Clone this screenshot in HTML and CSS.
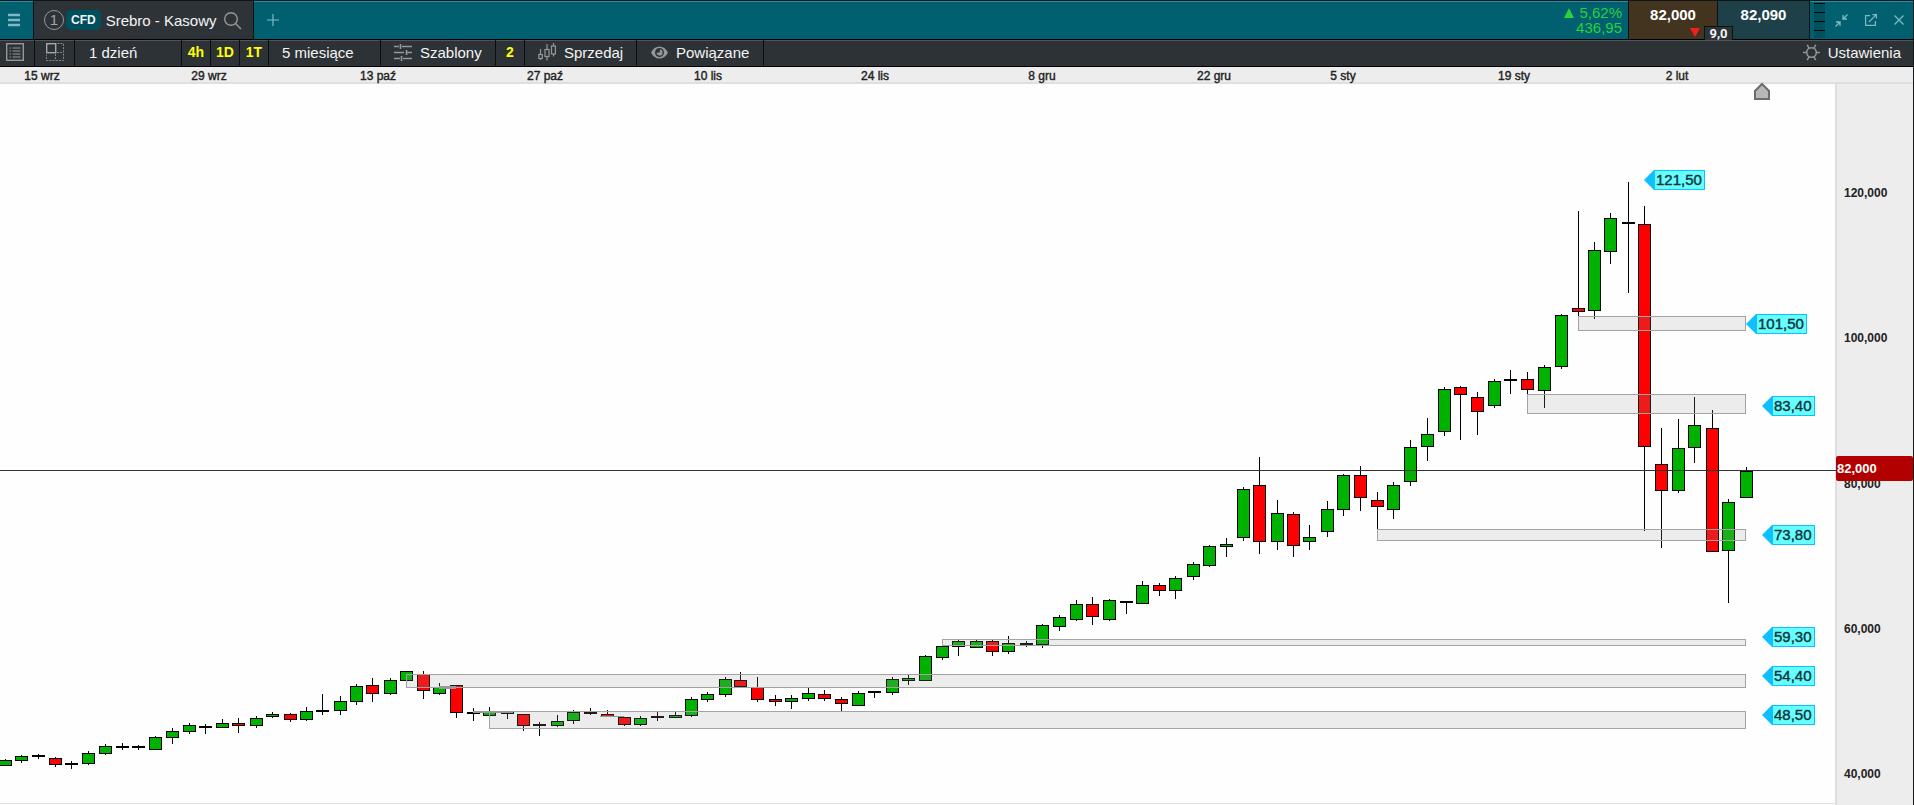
FILE: index.html
```html
<!DOCTYPE html>
<html lang="pl">
<head>
<meta charset="utf-8">
<title>Srebro - Kasowy</title>
<link rel="stylesheet" href="styles.css">
</head>
<body>
<header class="topbar">
  <button class="menu-btn" aria-label="Menu">
    <svg width="12" height="14" viewBox="0 0 12 14"><path d="M0 2H12M0 7H12M0 12H12" stroke="#7fb9c4" stroke-width="2.4"/></svg>
  </button>
  <div class="tab">
    <span class="tab-num">1</span>
    <span class="cfd">CFD</span>
    <h1 class="tab-title">Srebro - Kasowy</h1>
    <button class="icon-btn" aria-label="Szukaj">
      <svg width="19" height="19" viewBox="0 0 19 19" fill="none" stroke="#94989a" stroke-width="1.4"><circle cx="8" cy="8" r="6.3"/><path d="M12.5 12.5L18 18"/></svg>
    </button>
  </div>
  <button class="add-btn" aria-label="Dodaj kartę">
    <svg width="12" height="12" viewBox="0 0 12 12"><path d="M6 0V12M0 6H12" stroke="#7fb9c4" stroke-width="1.2"/></svg>
  </button>
  <div class="change">
    <div class="change-row"><svg width="10" height="10" viewBox="0 0 10 10"><path d="M5 0L10 10H0Z" fill="#27d23a"/></svg>5,62%</div>
    <div class="change-row">436,95</div>
  </div>
  <div class="quotes">
    <button class="quote sell">82,000</button>
    <button class="quote buy">82,090</button>
    <svg class="down" width="10" height="9" viewBox="0 0 10 9"><path d="M0 0H10L5 9Z" fill="#f51d1d"/></svg>
    <span class="spread">9,0</span>
  </div>
  <div class="window-tools">
    <span class="grip"></span>
    <button class="icon-btn" aria-label="Zmniejsz">
      <svg width="13" height="13" viewBox="0 0 13 13" fill="none" stroke="#7fb9c4" stroke-width="1.3"><path d="M12.5 .5L8.5 4.5M8 1V5H12M.5 12.5L4.500 8.500M1 8H5V12"/></svg>
    </button>
    <button class="icon-btn" aria-label="Otwórz w nowym oknie">
      <svg width="12" height="12" viewBox="0 0 12 12" fill="none" stroke="#7fb9c4" stroke-width="1.2"><path d="M5 1.600H.6V11.400H10.400V7M4 8L10.800 1.200M7.500 .6H11.400V4.500"/></svg>
    </button>
    <button class="icon-btn" aria-label="Zamknij">
      <svg width="10" height="10" viewBox="0 0 10 10" stroke="#7fb9c4" stroke-width="1.3"><path d="M.5 .5L9.500 9.500M9.500 .5L.5 9.500"/></svg>
    </button>
  </div>
</header>

<nav class="toolbar">
  <button class="tool tool-list" aria-label="Lista">
    <svg width="18" height="18" viewBox="0 0 18 18" fill="none" stroke="#94989a"><rect x=".7" y=".7" width="16.600" height="16.600" stroke-width="1.4"/><path d="M6.500 5H14.500M6.500 8H14.500M6.500 11H14.500M6.500 14H14.500M3.500 5H5M3.500 8H5M3.500 11H5M3.500 14H5" stroke-width="1.2"/></svg>
  </button>
  <button class="tool tool-grid" aria-label="Układ">
    <svg width="18" height="18" viewBox="0 0 18 18" fill="none" stroke="#85898c"><rect x=".7" y=".7" width="9" height="9" stroke="#a5a8aa" stroke-width="1.4"/><path d="M11.500 .5H17.500V17.500H.5V11.500M9.500 11V17M11 9.500H17" stroke-dasharray="2 1.200"/></svg>
  </button>
  <button class="tool tool-interval">1 dzień</button>
  <button class="tool quick">4h</button>
  <button class="tool quick">1D</button>
  <button class="tool quick">1T</button>
  <button class="tool tool-range">5 miesiące</button>
  <button class="tool tool-templates">
    <svg width="18" height="17" viewBox="0 0 18 17" fill="none" stroke="#94989a" stroke-width="1.600"><path d="M0 2.500H5M8 2.500H18M6.500 0V5M0 8.500H10M13 8.500H18M12.500 6V11M0 14.500H6M9 14.500H18M7.500 12V17"/></svg>
    Szablony
  </button>
  <button class="tool quick">2</button>
  <button class="tool tool-sell">
    <svg width="18" height="18" viewBox="0 0 18 18" fill="none" stroke="#94989a" stroke-width="1.200"><path d="M2.500 6V11.500M2.500 15.500V17M9 1V6.500M9 13.500V17.500M15.500 0V3M15.500 11V13.500"/><rect x=".8" y="11.500" width="3.500" height="4"/><rect x="7" y="6.500" width="4" height="7"/><rect x="13.500" y="3" width="3.900" height="8"/></svg>
    Sprzedaj
  </button>
  <button class="tool tool-linked">
    <svg width="17" height="13" viewBox="0 0 17 13"><path fill="#94989a" fill-rule="evenodd" d="M0 6.500C2 2.500 5 .5 8.500 .5S15 2.500 17 6.500C15 10.500 12 12.500 8.500 12.500S2 10.500 0 6.500ZM8.500 2A4.500 4.500 0 1 0 8.500 11A4.500 4.500 0 1 0 8.500 2Z"/><path d="M8.800 3.600A3 3 0 1 1 5.600 6.800L8.800 6.500Z" fill="#94989a"/></svg>
    Powiązane
  </button>
  <button class="tool tool-settings">
    <svg width="17" height="17" viewBox="0 0 17 17" fill="none" stroke="#94989a" stroke-width="1.500"><circle cx="8.500" cy="8.500" r="4.800"/><path d="M0 8.500H3.500M13.500 8.500H17M4.200 .8L6 4M12.800 .8L11 4M4.200 16.200L6 13M12.800 16.200L11 13"/></svg>
    Ustawienia
  </button>
</nav>

<main class="chart-area">
  <svg class="chart" id="chart" role="img" aria-label="Wykres świecowy srebra"></svg>
</main>
<script src="chart.js"></script>
</body>
</html>
```
FILE: styles.css
```css
* { box-sizing: border-box; }

body {
  margin: 0;
  height: 100vh;
  display: flex;
  flex-direction: column;
  overflow: hidden;
  border-right: 1px solid #15181a;
  background: #ededed;
  font-family: "Liberation Sans", Arial, sans-serif;
  font-size: 15px;
  color: #f4f4f4;
}

button {
  margin: 0;
  padding: 0;
  border: 0;
  background: none;
  color: inherit;
  font: inherit;
  cursor: pointer;
}

svg { display: block; flex: none; }

.topbar {
  display: flex;
  height: 40px;
  flex: none;
  border-top: 1px solid #101416;
  border-bottom: 1px solid #000;
  background: #006070;
  box-shadow: inset 0 1px #2391a6;
}

.menu-btn {
  width: 33px;
  padding-left: 8px;
}

.tab {
  display: flex;
  align-items: center;
  width: 221px;
  padding-left: 10px;
  border: solid #0c1113;
  border-width: 0 1px;
  background: #2e3338;
}

.tab-num {
  width: 20px;
  height: 20px;
  border: 1px solid #94989a;
  border-radius: 50%;
  color: #a0a4a6;
  font-size: 15px;
  line-height: 18px;
  text-align: center;
}

.cfd {
  margin: 0 5px 0 2px;
  padding: 0 5px;
  border-radius: 5px;
  background: #004f5c;
  font-size: 12px;
  font-weight: bold;
  line-height: 20px;
}

.tab-title {
  margin: 0;
  font-size: 15px;
  font-weight: normal;
}

.tab .icon-btn { margin-left: 6px; }

.add-btn { width: 38px; padding-left: 13px; }

.change {
  margin-left: auto;
  padding: 4px 6px 0 0;
  color: #27d23a;
  line-height: 15px;
  text-align: right;
}

.change-row {
  display: flex;
  align-items: center;
  justify-content: flex-end;
  gap: 5px;
}

.quotes {
  position: relative;
  display: flex;
  border: solid #0c1113;
  border-width: 0 1px;
}

.quote {
  width: 89px;
  padding-bottom: 11px;
  color: #fff;
  font-weight: bold;
}

.sell { background: #42341f; border-right: 1px solid #0c1113; }
.buy { width: 91px; background: #1e4048; }

.down {
  position: absolute;
  left: 61px;
  bottom: 2px;
}

.spread {
  position: absolute;
  left: 75px;
  bottom: -1px;
  width: 29px;
  border: 1px solid #0c1113;
  border-bottom: 0;
  background: #2e3338;
  font: bold 13px/13px Roboto, "Liberation Sans", sans-serif;
  text-align: center;
}

.window-tools {
  display: flex;
  align-items: center;
  gap: 17px;
  padding: 0 9px 0 4px;
}

.window-tools .grip { margin-right: -7px; }

.grip {
  width: 11px;
  height: 35px;
  background: repeating-linear-gradient(#000 0 1px, #00505e 1px 9px);
}

.toolbar {
  display: flex;
  flex: none;
  height: 27px;
  border-bottom: 1px solid #000;
  background: #2d3236;
  box-shadow: inset 0 1px #50565a;
}

.tool {
  display: flex;
  align-items: center;
  gap: 8px;
  padding-bottom: 2px;
  border-right: 1px solid #0b0d0e;
}

.tool-list { width: 35px; padding-left: 6px; }
.tool-grid { width: 40px; padding-left: 11px; }
.tool-interval { width: 107px; padding-left: 14px; }
.tool-range { width: 112px; padding-left: 13px; }
.tool-templates { width: 115px; padding-left: 13px; }
.tool-sell { width: 112px; padding-left: 13px; }
.tool-linked { width: 127px; padding-left: 14px; }

.tool-settings {
  margin-left: auto;
  padding-right: 12px;
  border-right: 0;
}

.quick {
  justify-content: center;
  width: 29px;
  color: #ffff00;
  font-size: 14px;
  font-weight: bold;
}

.chart-area {
  flex: 1;
  min-height: 0;
}

.chart { width: 100%; height: 100%; }

.axis-bg { fill: #ededed; }
.plot-bg { fill: #fefefe; }
.axis-line { fill: #dfdfdf; }
.date { fill: #222; font-size: 12px; stroke: #222; stroke-width: .4px; text-anchor: middle; }
.price { fill: #222; font-size: 12px; font-weight: bold; }
.up { fill: #00b200; stroke: #000; }
.dn { fill: #ff0000; stroke: #000; }
.flat { fill: #000; }
.wick { fill: #000; }
.zone { fill: rgba(155, 155, 155, .18); stroke: #a3a3a3; }
.mark { fill: #999; }
.last-line { fill: #333; }
.last-box { fill: #b20000; }
.last-text { fill: #fff; font-size: 13px; font-weight: bold; }
.tag-box { fill: #6ff; stroke: #0fbfff; }
.tag-tip { fill: #0fbfff; }
.tag-text { fill: #12333a; stroke: #12333a; stroke-width: .4px; font-size: 15px; }
.pin { fill: #b8b8b8; stroke: #6c6c6c; stroke-width: 2px; }
```
FILE: chart.js
```js
// Layout units of the chart; everything scales from here to the element size.
const BASE_W = 1913, BASE_H = 738, TOP = 67;

// [x, high, body top, body bottom, low, type]  g = up, r = down, k = flat
const candles = [
[5,758.5,760,766,766,'g'],[21,754.5,756,761,762.5,'g'],[38,754,754.5,756.5,758.5,'k'],[55,757,757.5,764.5,767,'r'],
[71,760.5,762.5,764.5,768.5,'k'],[88,751,752.5,763.5,764.5,'g'],[105,744,746,753.5,755,'g'],[122,743,746,748.5,749.5,'k'],
[138,744.5,746,748.5,749.5,'k'],[155,736,737,749.5,749.5,'g'],[172,728,731,738,743.5,'g'],[189,723,725,732,733.5,'g'],
[205,724,726,728.5,733.5,'k'],[222,719,722.5,728,728,'g'],[238,718,722.5,725.5,732.5,'r'],[256,716,717.5,726,728,'g'],
[272,712,714,717,718,'g'],[290,713,713.5,719.5,722,'r'],[306,707,711,719.5,720.5,'g'],[322,694,709.5,712,714.5,'k'],
[340,696,701,711,715,'g'],[356,684,686,702,704.5,'g'],[372,678,685,693.5,702,'r'],[390,678,680,693.5,694.5,'g'],
[406,671,671,681,681,'g'],[423,670.5,674,691,698.5,'r'],[439,683,687,693.5,695,'g'],[456,685,685,713,718,'r'],
[473,708,712,715,721,'k'],[489,707,712,716,716,'g'],[507,712,712,713.5,718.5,'k'],[523,713.5,714,726,731,'r'],
[539,721.5,723.5,726,736,'k'],[557,714.5,721,726,727,'g'],[573,710,712,721,723.5,'g'],[590,708,711.5,713.5,715,'k'],
[607,710,714,717,717,'r'],[624,716.5,717,725,726,'r'],[640,716,717.5,725,726,'g'],[657,712,716,718,721,'k'],
[675,712,715,718,718,'g'],[691,697,698.5,716,717,'g'],[707,692,694,699.5,702,'g'],[725,677,678.5,695,697,'g'],
[740,671.5,680,687,687,'r'],[757,677,687,699.5,702,'r'],[775,694.5,699,702,706,'r'],[791,694.5,697.5,702,708.5,'g'],
[808,687,692.5,698.5,701,'g'],[824,689.5,693.5,698.5,701,'r'],[841,697,698.5,703.5,711,'r'],[858,691,692.5,706,706,'g'],
[874,691,691,693.5,698,'k'],[892,677,678.5,693,694.5,'g'],[908,674.5,677.5,681,685,'g'],[925,654.5,656,680.5,681,'g'],
[942,645,645.5,658,659.5,'g'],[958,639.5,641,647,656,'g'],[976,639.5,641,648,648,'g'],[992,639.5,641,652,656,'r'],
[1008,636,642.5,652,653.5,'g'],[1026,641,642.5,645,647,'k'],[1042,623.5,625,644.5,648,'g'],[1059,614.5,616.5,627,631,'g'],
[1076,599.5,603.5,619.5,620.5,'g'],[1092,597,603.5,617,624.5,'r'],[1109,598.5,600,619.5,621,'g'],[1126,601,601,603.5,613.5,'k'],
[1142,581,585,604,604,'g'],[1159,582.5,585,591,596,'r'],[1175,576,577.5,591,598.5,'g'],[1193,562,564,577,579.5,'g'],
[1209,544.5,546,566,567,'g'],[1226,538,544,547,557,'g'],[1243,487,489,538,541,'g'],[1259,457,485,542,553.5,'r'],
[1277,499.5,512.5,542,550,'g'],[1293,512,513.5,545.5,557,'r'],[1309,524.5,536.5,542,550,'g'],[1327,501,509,532,537,'g'],
[1343,473.5,475,509.5,516,'g'],[1360,465.5,475,498,511,'r'],[1377,492,500,507,529,'r'],[1393,482,485,509.5,518.5,'g'],
[1410,439.5,446.5,482,486,'g'],[1427,418,434,447,461,'g'],[1444,387,389,432,436,'g'],[1460,386,386.5,394.5,439.5,'r'],
[1477,392,396.5,412,434.5,'r'],[1494,378.5,380.5,406,407.5,'g'],[1510,369.5,378.5,381,393.5,'k'],[1527,372,379,389.5,393.5,'r'],
[1544,364.5,366.5,391,407.5,'g'],[1561,313.5,315,367,368.5,'g'],[1578,211,307.5,312,316,'r'],[1594,242,250,311,318.5,'g'],
[1610,213,217.5,252,263.5,'g'],[1628,182,222,224.5,292.5,'k'],[1644,206,224,447,531,'r'],[1661,428,464,491,547.5,'r'],
[1678,418.5,447.5,491,492.5,'g'],[1694,397,425,448,462.5,'g'],[1712,409.5,427.5,552,552,'r'],[1728,498.5,501.5,550.5,602.5,'g'],
[1746,467,470.5,498,498,'g']];

const zones = [[1578,316,330],[1527,394,413],[1377,529,540],[942,639,645],[406,674,687],[489,711,728]];
const ZONE_END = 1746;
const marks = [[439,686,17,3],[473,711,40,2],[600,716,24,1]];
const tags = [[1644,170,'121,50'],[1746,314,'101,50'],[1762,396,'83,40'],[1762,525,'73,80'],
  [1762,627,'59,30'],[1762,666,'54,40'],[1762,705,'48,50']];
const dates = [[42,'15 wrz'],[209,'29 wrz'],[378,'13 paź'],[545,'27 paź'],[708,'10 lis'],[875,'24 lis'],
  [1042,'8 gru'],[1214,'22 gru'],[1343,'5 sty'],[1514,'19 sty'],[1677,'2 lut']];
const prices = [[193,'120,000'],[338,'100,000'],[484,'80,000'],[629,'60,000'],[774,'40,000']];

const svg = document.getElementById('chart');

function draw() {
  const w = svg.clientWidth, h = svg.clientHeight;
  const X = v => Math.round(v * w / BASE_W);
  const Y = v => 17 + Math.round((v - TOP - 17) * (h - 17) / (BASE_H - 17));
  const rect = (c, x, y, rw, rh, extra = '') =>
    `<rect class="${c}" x="${x}" y="${y}" width="${rw}" height="${rh}" ${extra}/>`;
  const text = (c, x, y, s) => `<text class="${c}" x="${x}" y="${y}">${s}</text>`;
  const axisX = w - 77;
  let out = rect('axis-bg', 0, 0, w, h) + rect('plot-bg', 0, 17, axisX, h - 17) +
    rect('axis-line', 0, 15, w, 2) + rect('axis-line', axisX - 1, 17, 2, h) +
    rect('axis-line', 0, h - 2, axisX, 1);

  for (const [x, hi, a, b, lo, type] of candles) {
    const cx = X(x), top = Y(a), bot = Y(b);
    out += rect('wick', cx, Y(hi), 1, Math.max(1, Y(lo) - Y(hi)));
    out += type === 'k'
      ? rect('flat', cx - 6, top, 13, 2)
      : rect(type === 'g' ? 'up' : 'dn', cx - 5.5, top + .5, 12, Math.max(2, bot - top - 1));
  }
  for (const [x, a, b] of zones)
    out += rect('zone', X(x) + .5, Y(a) + .5, X(ZONE_END) - X(x) - 1, Y(b) - Y(a));
  for (const [x, y, mw, mh] of marks) out += rect('mark', X(x), Y(y), mw, mh);

  for (const [x, s] of dates) out += text('date', X(x), 13, s);
  for (const [y, s] of prices) out += text('price', w - 69, Y(y) + 4, s);

  const last = Y(470);
  out += rect('last-line', 0, last, axisX, 1);
  out += rect('last-box', w - 77, last - 14, 77, 25, 'rx="2"') + text('last-text', w - 76, last + 3, '82,000');

  for (const [x, y, s] of tags) {
    const tx = X(x), ty = Y(y), tw = s.length > 5 ? 50 : 42;
    out += `<path class="tag-tip" d="M${tx} ${ty + 10}L${tx + 10} ${ty}V${ty + 20}Z"/>` +
      rect('tag-box', tx + 10.5, ty + .5, tw, 19) + text('tag-text', tx + 12, ty + 15, s);
  }
  const px = X(1762), py = 17;
  out += `<path class="pin" d="M${px - 7} ${py + 15}V${py + 7}L${px} ${py}L${px + 7} ${py + 7}V${py + 15}Z"/>`;
  svg.innerHTML = out;
}

draw();
addEventListener('resize', draw);
```
